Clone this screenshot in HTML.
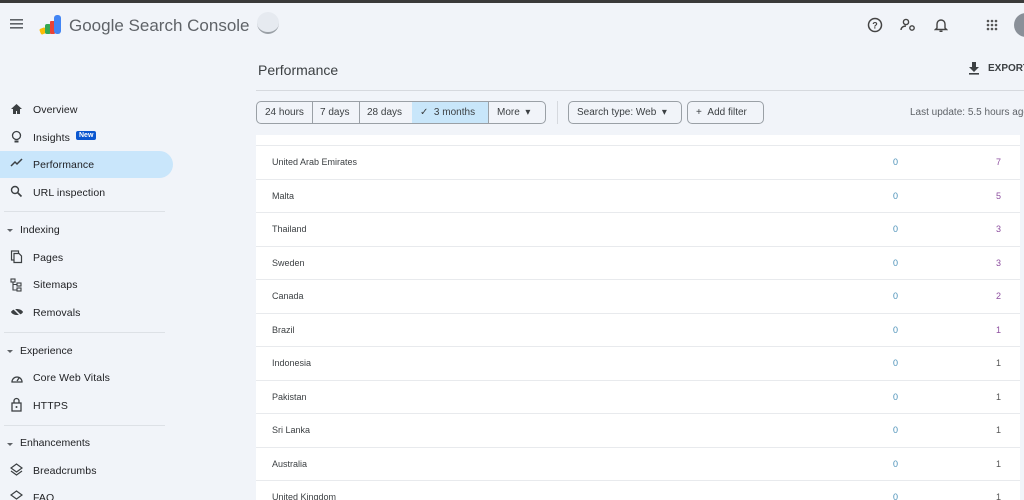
<!DOCTYPE html>
<html><head><meta charset="utf-8"><style>
*{box-sizing:border-box;margin:0;padding:0}
html,body{width:1024px;height:500px;overflow:hidden}
body{background:#f1f4f9;font-family:"Liberation Sans",Arial,sans-serif;color:#3c4043;position:relative}
.abs{position:absolute}
.topbar{left:0;top:0;width:1024px;height:3px;background:#3a3a3a}
.nav{position:absolute;left:33px;font-size:10.5px;color:#202124;letter-spacing:0.1px;white-space:nowrap}
.ico{position:absolute;left:10px}
.sec{position:absolute;left:20px;font-size:10.5px;color:#202124;white-space:nowrap}
.tri{position:absolute;left:7px;width:0;height:0;border-left:3px solid transparent;border-right:3px solid transparent;border-top:3px solid #5f6368}
.div{position:absolute;left:4px;width:161px;height:1px;background:#dde1e6}
.btn{position:absolute;top:101px;height:23px;border:1px solid #9aa0a6;font-size:10px;line-height:21px;color:#3c4043;padding:0 8px;white-space:nowrap;overflow:hidden}
.card{left:256px;top:135px;width:764px;height:365px;background:#fff}
.row{position:absolute;left:256px;width:764px;height:33.5px;border-top:1px solid #e8eaed;font-size:9px;overflow:hidden}
.row .n{position:absolute;left:16px;top:11px;color:#3c4043}
.row .a{position:absolute;left:637px;top:11px;color:#4a90b8}
.row .b{position:absolute;left:740px;top:11px;color:#8e4fa0}
</style></head><body>
<div class="abs topbar"></div>
<svg class="abs" style="left:10px;top:18px" width="14" height="12"><rect y="1" width="13" height="1.6" fill="#5f6368"/><rect y="5" width="13" height="1.6" fill="#5f6368"/><rect y="9" width="13" height="1.6" fill="#5f6368"/></svg>
<svg class="abs" style="left:39px;top:14px" width="24" height="22"><rect x="1" y="14" width="6" height="6" rx="1.5" fill="#fbbc04" transform="rotate(-20 4 17)"/><rect x="6" y="10" width="6" height="10" rx="2" fill="#34a853"/><rect x="11" y="7" width="5" height="13" rx="1" fill="#ea4335"/><rect x="15" y="1" width="7" height="19" rx="3" fill="#4285f4"/></svg>
<div class="abs" style="left:69px;top:16px;font-size:17px;color:#5f6368">Google Search Console</div>
<div class="abs" style="left:257px;top:12px;width:22px;height:22px;border-radius:50%;background:#e6eaf0;border-bottom:2px solid #9aa0a6"></div>
<svg class="abs" style="left:867px;top:17px" width="16" height="16"><circle cx="8" cy="8" r="6.5" fill="none" stroke="#444" stroke-width="1.5"/><text x="8" y="11.5" font-size="9" font-weight="bold" text-anchor="middle" fill="#444" font-family="Liberation Sans">?</text></svg>
<svg class="abs" style="left:900px;top:17px" width="16" height="16"><circle cx="6" cy="5" r="2.6" fill="none" stroke="#444" stroke-width="1.4"/><path d="M1 13c0-3 3-4 5-4" fill="none" stroke="#444" stroke-width="1.4"/><circle cx="12" cy="11" r="2.2" fill="none" stroke="#444" stroke-width="1.4"/></svg>
<svg class="abs" style="left:934px;top:17px" width="14" height="16"><path d="M3 11V7a4 4 0 0 1 8 0v4l1.5 1.5h-11z" fill="none" stroke="#444" stroke-width="1.4"/><rect x="5.5" y="13.5" width="3" height="1.5" fill="#444"/></svg>
<svg class="abs" style="left:986px;top:19px" width="12" height="12"><g fill="#555"><circle cx="2" cy="2" r="1.3"/><circle cx="6" cy="2" r="1.3"/><circle cx="10" cy="2" r="1.3"/><circle cx="2" cy="6" r="1.3"/><circle cx="6" cy="6" r="1.3"/><circle cx="10" cy="6" r="1.3"/><circle cx="2" cy="10" r="1.3"/><circle cx="6" cy="10" r="1.3"/><circle cx="10" cy="10" r="1.3"/></g></svg>
<div class="abs" style="left:1014px;top:13px;width:24px;height:24px;border-radius:50%;background:#8a9099"></div>
<div class="abs" style="left:258px;top:62px;font-size:14px;color:#3c4043">Performance</div>
<svg class="abs" style="left:968px;top:61px" width="12" height="14"><path d="M4 1h4v5h3l-5 5-5-5h3z" fill="#3c4043"/><rect x="1" y="12" width="10" height="1.6" fill="#3c4043"/></svg>
<div class="abs" style="left:988px;top:63px;font-size:10px;font-weight:bold;color:#3c4043">EXPORT</div>
<div class="abs" style="left:256px;top:90px;width:768px;height:1px;background:#d6d9de"></div>
<div class="btn" style="left:256px;width:57px;border-radius:5px 0 0 5px">24 hours</div>
<div class="btn" style="left:312px;width:48px;border-left:none">7 days</div>
<div class="btn" style="left:359px;width:54px;padding:0 7px">28 days</div>
<div class="btn" style="left:412px;width:77px;background:#c8e6fa;border-left:none">&#10003;&nbsp; 3 months</div>
<div class="btn" style="left:488px;width:58px;border-radius:0 5px 5px 0">More &nbsp;▾</div>
<div class="abs" style="left:557px;top:101px;width:1px;height:23px;background:#d6d9de"></div>
<div class="btn" style="left:568px;width:114px;border-radius:5px">Search type: Web &nbsp;▾</div>
<div class="btn" style="left:687px;width:77px;border-radius:5px">+ &nbsp;Add filter</div>
<div class="abs" style="left:910px;top:107px;font-size:10px;color:#5f6368;white-space:nowrap">Last update: 5.5 hours ago</div>
<div class="abs" style="left:0;top:151px;width:173px;height:27px;background:#c9e6fb;border-radius:0 14px 14px 0"></div>
<svg class="ico" style="top:103px" width="13" height="12"><path d="M6.5 1L1 6h2v5h3V8h1v3h3V6h2z" fill="#3c4043"/></svg>
<div class="nav" style="top:104px">Overview</div>
<svg class="ico" style="top:130px" width="13" height="14"><circle cx="6.5" cy="5.5" r="4" fill="none" stroke="#3c4043" stroke-width="1.3"/><rect x="4.5" y="10.5" width="4" height="2" fill="#3c4043"/></svg>
<div class="nav" style="top:132px">Insights</div>
<div class="abs" style="left:76px;top:131px;background:#0b57d0;color:#fff;font-size:7px;font-weight:bold;padding:1px 3px;border-radius:2px">New</div>
<svg class="ico" style="top:158px" width="13" height="10"><path d="M1 8l4-4 2 2 5-5" fill="none" stroke="#3c4043" stroke-width="1.5"/></svg>
<div class="nav" style="top:159px">Performance</div>
<svg class="ico" style="top:185px" width="13" height="13"><circle cx="5" cy="5" r="3.5" fill="none" stroke="#3c4043" stroke-width="1.4"/><path d="M7.5 7.5l4 4" stroke="#3c4043" stroke-width="1.6"/></svg>
<div class="nav" style="top:187px">URL inspection</div>
<div class="div" style="top:211px"></div>
<div class="tri" style="top:229px"></div><div class="sec" style="top:224px">Indexing</div>
<svg class="ico" style="top:250px" width="13" height="14"><rect x="1.5" y="1" width="7" height="9" fill="none" stroke="#3c4043" stroke-width="1.2"/><path d="M4 3.5h5l2.5 2.5v6.5H4z" fill="#f1f4f9" stroke="#3c4043" stroke-width="1.2"/></svg>
<div class="nav" style="top:252px">Pages</div>
<svg class="ico" style="top:278px" width="13" height="14"><rect x="1" y="1" width="4" height="3" fill="none" stroke="#3c4043" stroke-width="1.1"/><rect x="7" y="5" width="4" height="3" fill="none" stroke="#3c4043" stroke-width="1.1"/><rect x="7" y="10" width="4" height="3" fill="none" stroke="#3c4043" stroke-width="1.1"/><path d="M3 4v8h4M3 6.5h4" fill="none" stroke="#3c4043" stroke-width="1.1"/></svg>
<div class="nav" style="top:279px">Sitemaps</div>
<svg class="ico" style="top:306px" width="14" height="12"><path d="M1 6c2-4 10-4 12 0-2 4-10 4-12 0z" fill="#3c4043"/><path d="M2 1l10 10" stroke="#f1f4f9" stroke-width="1.5"/></svg>
<div class="nav" style="top:307px">Removals</div>
<div class="div" style="top:332px"></div>
<div class="tri" style="top:350px"></div><div class="sec" style="top:345px">Experience</div>
<svg class="ico" style="top:372px" width="14" height="11"><path d="M2 10a5 5 0 1 1 10 0z" fill="none" stroke="#3c4043" stroke-width="1.3"/><path d="M7 9l2-3" stroke="#3c4043" stroke-width="1.3"/></svg>
<div class="nav" style="top:372px">Core Web Vitals</div>
<svg class="ico" style="top:397px" width="13" height="15"><path d="M4 6V4a2.5 2.5 0 0 1 5 0v2" fill="none" stroke="#3c4043" stroke-width="1.3"/><rect x="2" y="6" width="9" height="8" fill="none" stroke="#3c4043" stroke-width="1.3"/><circle cx="6.5" cy="10" r="1" fill="#3c4043"/></svg>
<div class="nav" style="top:400px">HTTPS</div>
<div class="div" style="top:425px"></div>
<div class="tri" style="top:443px"></div><div class="sec" style="top:437px">Enhancements</div>
<svg class="ico" style="top:463px" width="13" height="13"><path d="M6.5 1L1 5l5.5 4L12 5z" fill="none" stroke="#3c4043" stroke-width="1.2"/><path d="M1 8l5.5 4L12 8" fill="none" stroke="#3c4043" stroke-width="1.2"/></svg>
<div class="nav" style="top:465px">Breadcrumbs</div>
<svg class="ico" style="top:490px" width="13" height="13"><path d="M6.5 1L1 5l5.5 4L12 5z" fill="none" stroke="#3c4043" stroke-width="1.2"/></svg>
<div class="nav" style="top:492px">FAQ</div>
<div class="abs card"></div>
<div class="row" style="top:145px"><span class="n">United Arab Emirates</span><span class="a">0</span><span class="b">7</span></div>
<div class="row" style="top:178.5px"><span class="n">Malta</span><span class="a">0</span><span class="b">5</span></div>
<div class="row" style="top:212px"><span class="n">Thailand</span><span class="a">0</span><span class="b">3</span></div>
<div class="row" style="top:245.5px"><span class="n">Sweden</span><span class="a">0</span><span class="b">3</span></div>
<div class="row" style="top:279px"><span class="n">Canada</span><span class="a">0</span><span class="b">2</span></div>
<div class="row" style="top:312.5px"><span class="n">Brazil</span><span class="a">0</span><span class="b">1</span></div>
<div class="row" style="top:346px"><span class="n">Indonesia</span><span class="a">0</span><span class="b" style="color:#555">1</span></div>
<div class="row" style="top:379.5px"><span class="n">Pakistan</span><span class="a">0</span><span class="b" style="color:#555">1</span></div>
<div class="row" style="top:413px"><span class="n">Sri Lanka</span><span class="a">0</span><span class="b" style="color:#555">1</span></div>
<div class="row" style="top:446.5px"><span class="n">Australia</span><span class="a">0</span><span class="b" style="color:#555">1</span></div>
<div class="row" style="top:480px;height:20px"><span class="n">United Kingdom</span><span class="a">0</span><span class="b" style="color:#555">1</span></div>
</body></html>
